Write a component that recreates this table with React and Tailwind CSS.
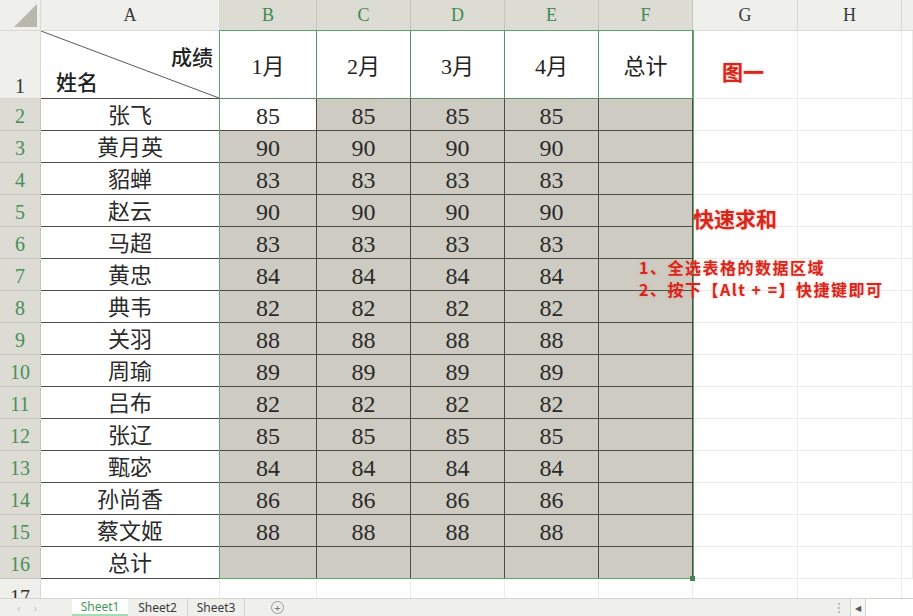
import React from "react";

const names = ["张飞", "黄月英", "貂蝉", "赵云", "马超", "黄忠", "典韦", "关羽", "周瑜", "吕布", "张辽", "甄宓", "孙尚香", "蔡文姬"];
const scores = [85, 90, 83, 90, 83, 84, 82, 88, 89, 82, 85, 84, 86, 88];

const hdr = "flex items-center justify-center bg-[#efefec] border-r border-b border-[#d9d9d4] text-[18px] text-[#3a3a3a] leading-none";
const hdrSel = "flex items-center justify-center bg-[#dcdbd4] border-r border-b border-[#c6c5bd] text-[18px] text-[#3f8a50] leading-none";
const rowHdrSel = "flex items-center justify-center pt-[3px] bg-[#dcdbd4] border-r border-b border-[#c6c5bd] text-[20px] text-[#4a8f58] leading-none";
const cellW = "flex items-center justify-center pt-[3px] bg-white border-r border-b border-[#4d4d46] text-[24px] leading-none text-[#2a2a2a]";
const cellG = "flex items-center justify-center pt-[3px] bg-[#cecbc2] border-r border-b border-[#4d4d46] text-[24px] leading-none text-[#2a2a2a]";
const nameCell = "flex items-center justify-center pt-[3px] bg-white border-r border-b border-[#4d4d46] text-[22px] leading-none text-[#2a2a2a]";
const outCell = "bg-white border-r border-b border-[#ecece9]";
const monthCell = "flex items-center justify-center pt-[4px] bg-white border-r border-b border-[#5d8f63] text-[22px] leading-none";

function DataRow({ r, name, score }) {
  return (
    <>
      <div className={rowHdrSel}>{r}</div>
      <div className={nameCell}>{name}</div>
      <div className={r === 2 ? cellW : cellG}>{score}</div>
      <div className={cellG}>{score}</div>
      <div className={cellG}>{score}</div>
      <div className={cellG}>{score}</div>
      <div className={cellG}></div>
      <div className={outCell}></div>
      <div className={outCell}></div>
      <div className={outCell}></div>
    </>
  );
}

export default function App() {
  return (
    <div className="relative w-[913px] h-[616px] overflow-hidden bg-white font-['Liberation_Serif','Noto_Sans_CJK_SC',serif] text-[#222]">
      <div className="grid grid-cols-[41px_179px_97px_94px_94px_94px_94px_105px_104px_11px] grid-rows-[31px_68px_repeat(15,32px)_19px]">
        {/* column headers */}
        <div className="flex items-end justify-end pr-[3px] pb-[3px] bg-[#efefec] border-r border-b border-[#d9d9d4]">
          <svg width="23" height="23" viewBox="0 0 23 23">
            <polygon points="0,23 23,23 23,0" fill="#b9b8ae" />
          </svg>
        </div>
        <div className={hdr}>A</div>
        <div className={hdrSel}>B</div>
        <div className={hdrSel}>C</div>
        <div className={hdrSel}>D</div>
        <div className={hdrSel}>E</div>
        <div className={hdrSel}>F</div>
        <div className={hdr}>G</div>
        <div className={hdr}>H</div>
        <div className="bg-[#efefec] border-b border-[#d9d9d4]"></div>

        {/* row 1 */}
        <div className="flex items-end justify-center pb-[2px] bg-[#efefec] border-r border-b border-[#d9d9d4] text-[20px] text-[#333] leading-none">1</div>
        <div className="relative flex flex-col justify-between bg-white border-r border-b border-[#4d4d46] pt-[17px] pb-[4px] pl-[15px] pr-[6px] text-[21px] leading-none text-[#222] font-medium">
          <svg className="absolute inset-0 w-full h-full" viewBox="0 0 178 67" preserveAspectRatio="none">
            <line x1="0" y1="0" x2="178" y2="67" stroke="#5a5a52" strokeWidth="1" />
          </svg>
          <span className="self-end">成绩</span>
          <span className="self-start">姓名</span>
        </div>
        <div className={monthCell}>1月</div>
        <div className={monthCell}>2月</div>
        <div className={monthCell}>3月</div>
        <div className={monthCell}>4月</div>
        <div className={monthCell}>总计</div>
        <div className={outCell}></div>
        <div className={outCell}></div>
        <div className={outCell}></div>

        {names.map((n, i) => (
          <DataRow key={n} r={i + 2} name={n} score={scores[i]} />
        ))}

        {/* row 16 */}
        <div className={rowHdrSel}>16</div>
        <div className={nameCell}>总计</div>
        <div className={cellG}></div>
        <div className={cellG}></div>
        <div className={cellG}></div>
        <div className={cellG}></div>
        <div className={cellG}></div>
        <div className={outCell}></div>
        <div className={outCell}></div>
        <div className={outCell}></div>

        {/* row 17 */}
        <div className="flex justify-center pt-[8px] bg-[#efefec] border-r border-[#d9d9d4] text-[20px] text-[#333] leading-none overflow-hidden">17</div>
        <div className="bg-white border-r border-[#ecece9]"></div>
        <div className="bg-white border-r border-[#ecece9]"></div>
        <div className="bg-white border-r border-[#ecece9]"></div>
        <div className="bg-white border-r border-[#ecece9]"></div>
        <div className="bg-white border-r border-[#ecece9]"></div>
        <div className="bg-white border-r border-[#ecece9]"></div>
        <div className="bg-white border-r border-[#ecece9]"></div>
        <div className="bg-white border-r border-[#ecece9]"></div>
        <div className="bg-white"></div>
      </div>

      {/* sheet tab bar */}
      <div className="flex h-[18px] items-stretch bg-[#efefec] border-t border-[#d3d3ce] font-['Noto_Sans',sans-serif] text-[12px] leading-none">
        <div className="w-[72px] flex items-center gap-[13px] pl-[17px] text-[#c4c4bf] text-[11px]">
          <span>‹</span>
          <span>›</span>
        </div>
        <div className="w-[56px] flex items-center justify-center bg-white text-[#3f9a55] border-b-2 border-[#a6dcb2]">Sheet1</div>
        <div className="w-[60px] flex items-center justify-center text-[#3a3a3a] border-r border-[#d3d3ce]">Sheet2</div>
        <div className="w-[57px] flex items-center justify-center text-[#3a3a3a] border-r border-[#d3d3ce]">Sheet3</div>
        <div className="flex items-center pl-[26px]">
          <div className="w-[13px] h-[13px] rounded-full border border-[#9a9a95] flex items-center justify-center text-[11px] text-[#777] leading-none">+</div>
        </div>
        <div className="flex-1"></div>
        <div className="flex flex-col justify-center gap-[2px] pr-[10px]">
          <span className="block w-[2px] h-[2px] bg-[#bdbdb8]"></span>
          <span className="block w-[2px] h-[2px] bg-[#bdbdb8]"></span>
          <span className="block w-[2px] h-[2px] bg-[#bdbdb8]"></span>
        </div>
        <div className="w-[16px] flex items-center justify-center bg-[#f7f7f5] border-l border-r border-[#d3d3ce] text-[8px] text-[#555]">◀</div>
        <div className="w-[47px] bg-white"></div>
      </div>

      {/* selection outline */}
      <div className="absolute left-[219px] top-[30px] w-[475px] h-[549px] border border-[#5fa56c] pointer-events-none"></div>
      <div className="absolute left-[690px] top-[576px] w-[5px] h-[5px] bg-[#3d8a4c]"></div>

      {/* red annotations */}
      <div className="absolute left-[722px] top-[61px] font-['Noto_Sans_CJK_SC',sans-serif] text-[21px] font-bold leading-none text-[#d8261c] [text-shadow:0_0_3px_rgba(240,120,90,0.45)]">图一</div>
      <div className="absolute left-[693px] top-[208px] font-['Noto_Sans_CJK_SC',sans-serif] text-[21px] font-bold leading-none text-[#d8261c] [text-shadow:0_0_3px_rgba(240,120,90,0.45)]">快速求和</div>
      <div className="absolute left-[639px] top-[256px] font-['Noto_Sans_CJK_SC',sans-serif] text-[16px] font-bold leading-[22px] tracking-[1.5px] text-[#d8261c] [text-shadow:0_0_3px_rgba(240,120,90,0.45)]">
        <div>1、全选表格的数据区域</div>
        <div>2、按下【Alt + =】快捷键即可</div>
      </div>
    </div>
  );
}
